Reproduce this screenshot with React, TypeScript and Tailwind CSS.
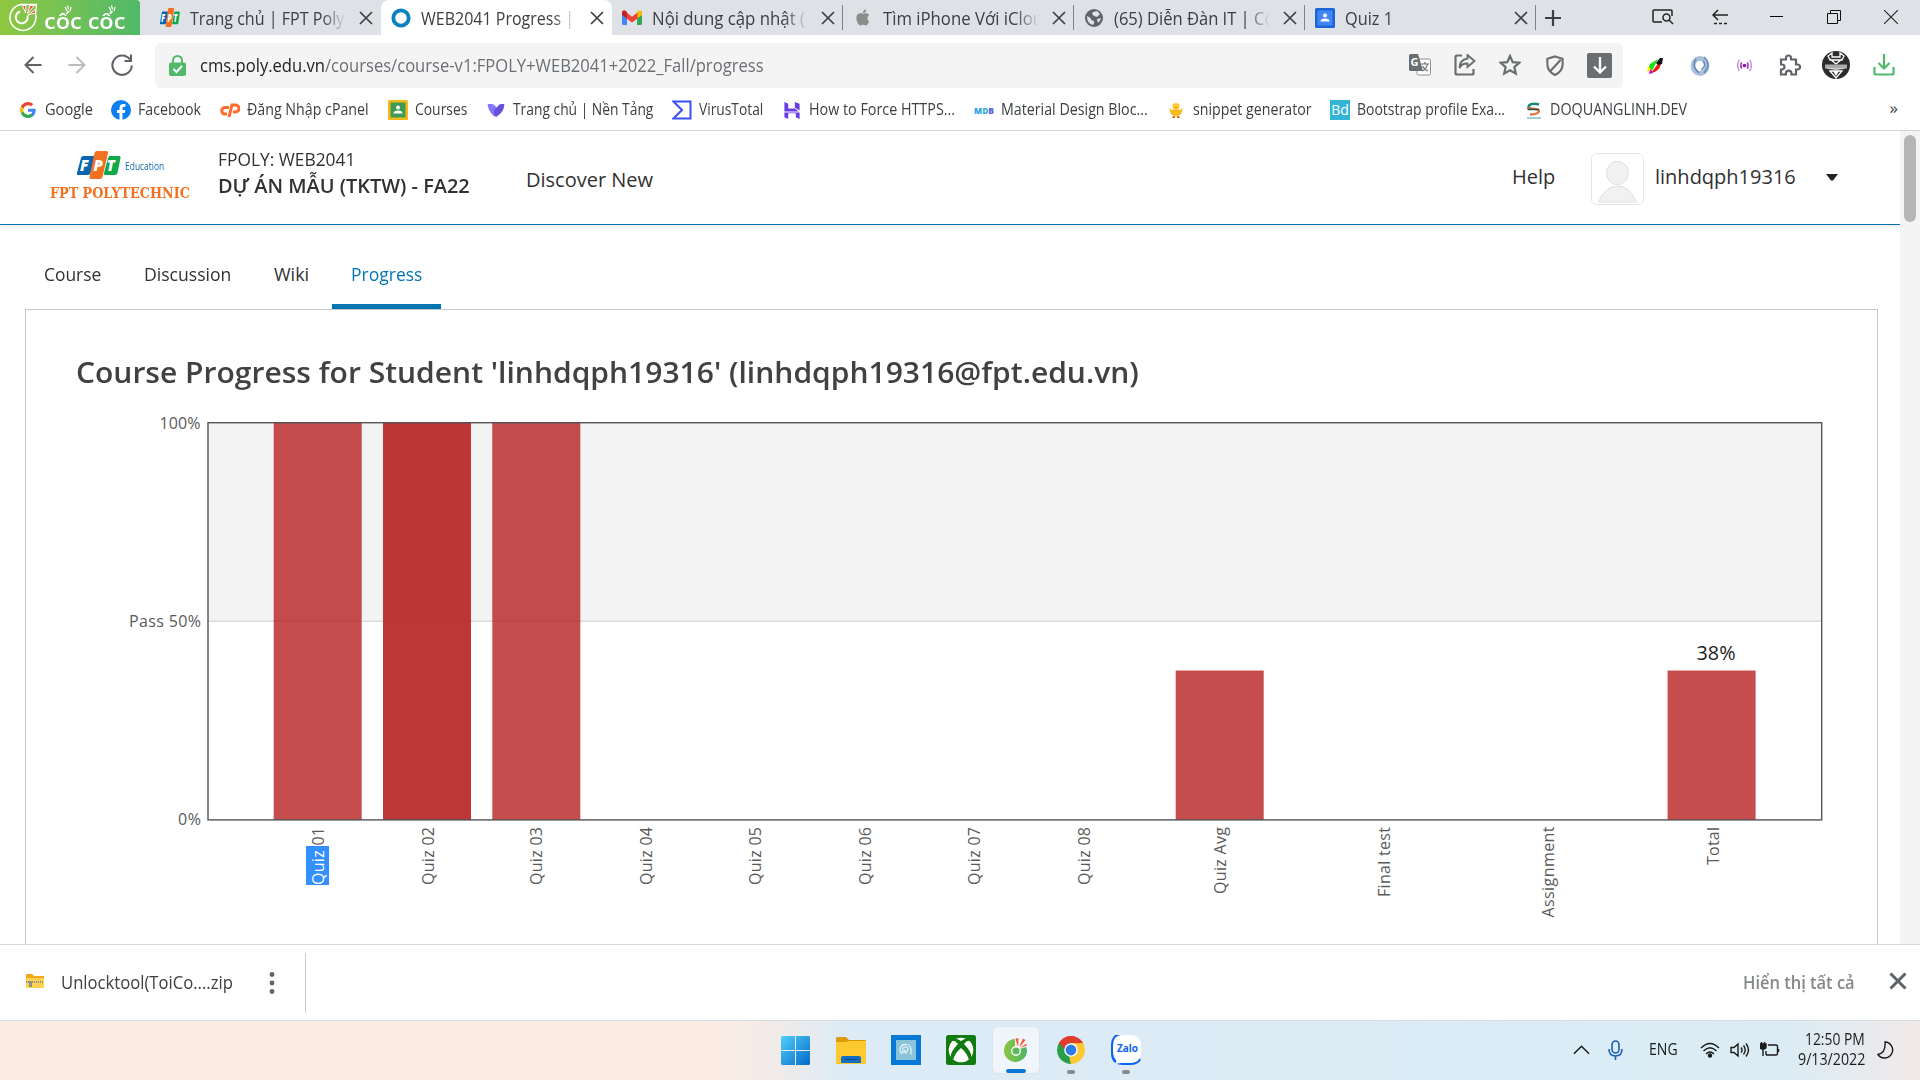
import React, { useLayoutEffect, useRef, useState } from "react";

/* A single line of text drawn at a fixed width. */
function Fit({ w, className = "", children }: { w: number; className?: string; children: React.ReactNode }) {
  const ref = useRef<HTMLSpanElement>(null);
  const [k, setK] = useState(1);
  useLayoutEffect(() => {
    if (ref.current) setK(w / ref.current.offsetWidth);
  }, [w]);
  return (
    <span className={`block shrink-0 whitespace-nowrap ${className}`} style={{ width: w }}>
      <span ref={ref} className="inline-block origin-left" style={{ transform: `scaleX(${k})` }}>
        {children}
      </span>
    </span>
  );
}

function FptLogo({ className }: { className: string }) {
  return (
    <svg viewBox="0 0 44 28" className={className} preserveAspectRatio="none">
      <path d="M6 5h10q2 0 1.500 2l-4 15q-.5 2-2.500 2H1q-1.500 0-1-2L4 7q.5-2 2-2z" fill="#0a64ae" />
      <path d="M33 5h9q2 0 1.500 2l-3 15q-.5 2-2.500 2H28q-1.500 0-1-2l4-15q.5-2 2-2z" fill="#0ea94b" />
      <path d="M20 0h9q2.500 0 2 2l-5.500 24q-.5 2-2.500 2h-9q-2 0-1.500-2l5-24q.5-2 2.500-2z" fill="#f37021" />
      <g fill="#fff" fontFamily="Open Sans" fontWeight="800" fontStyle="italic" fontSize="15">
        <text x="3" y="20">F</text>
        <text x="16.500" y="20">P</text>
        <text x="29.500" y="20">T</text>
      </g>
    </svg>
  );
}

function CocMark({ light = false }: { light?: boolean }) {
  return light ? (
    <svg viewBox="0 0 30 30" className="h-[30px] w-[30px]" fill="none">
      <path d="M12.500 1.500A13 13 0 1 0 26.500 11" stroke="#fff" strokeWidth="1.500" />
      <path d="M12.500 2V1.500H27.500L26.500 11" stroke="#fff" strokeWidth="1.300" />
      <path d="M11 8.500a6 6 0 1 0 7.500 4" stroke="#fff" strokeWidth="2" />
      <path d="M13.500 2.500l3.500 0-.5 7.500z M21 2.500l4.500 0-7 8z M26.500 6.500l0 3.500-7.500 2z" fill="#f0532d" stroke="#fff" strokeWidth="1" />
    </svg>
  ) : (
    <svg viewBox="0 0 24 26" className="h-[26px] w-6">
      <defs>
        <linearGradient id="cc" x1="0" x2="1">
          <stop offset="0" stopColor="#8bc53f" />
          <stop offset="1" stopColor="#4cb564" />
        </linearGradient>
      </defs>
      <path d="M11 2A11.500 11.500 0 1 0 23 14q0-2-1-4l-7 2-4-1z" fill="url(#cc)" />
      <circle cx="12" cy="14" r="5" fill="#fff" />
      <circle cx="12" cy="14" r="3.600" fill="#5cb85a" />
      <path d="M11 1h4l-.5 8h-1.500z M19 1l3 2-6 7-1-1z M23 6v3l-6 2-.5-1z" fill="#f05a3c" stroke="#fff" strokeWidth=".7" />
    </svg>
  );
}

const X = () => (
  <svg viewBox="0 0 14 14" className="h-[14px] w-[14px] shrink-0" stroke="#3c4043" strokeWidth="1.700">
    <path d="M1 1l12 12M13 1L1 13" />
  </svg>
);

const Ring = () => (
  <svg viewBox="0 0 20 20" className="h-5 w-5">
    <circle cx="10" cy="10" r="7.700" fill="none" stroke="#0b82c0" strokeWidth="3.800" />
  </svg>
);
const Gmail = () => (
  <svg viewBox="0 0 20 15" className="h-[15px] w-5">
    <path d="M0 2h5v13H1.500Q0 15 0 13.500z" fill="#4285f4" />
    <path d="M15 2h5v11.500q0 1.500-1.500 1.500H15z" fill="#34a853" />
    <path d="M15 2l2-1.500Q20-.5 20 3v2l-5 3.500z" fill="#fbbc04" />
    <path d="M4.500 2.500L10 6.700l5.500-4.200v6L10 12.500 4.500 8.500z" fill="#ea4335" />
    <path d="M5 2L3 .5Q0-.5 0 3v2l5 3.500z" fill="#c5221f" />
  </svg>
);
const Apple = () => (
  <svg viewBox="0 0 24 24" className="h-[19px] w-[19px]" fill="#8b8b8b">
    <path d="M17 12.500c0-2.500 2-3.700 2.200-3.800-1.200-1.700-3-2-3.700-2-1.600-.2-3 .9-3.900.9-.8 0-2-.9-3.300-.9C5 6.800 3 9 3 12.800 3 17 6 22 8.300 22c1.200 0 1.700-.8 3.200-.8s1.900.8 3.200.8c2 0 4-3.500 4.500-5.300-.2 0-2.200-1-2.200-4.200zM14.300 5.200C15 4.300 15.500 3 15.300 1.800c-1 0-2.300.7-3 1.600-.7.800-1.300 2-1.100 3.200 1.200.1 2.400-.6 3.100-1.400z" />
  </svg>
);
const Globe = () => (
  <svg viewBox="0 0 18 18" className="h-[18px] w-[18px]">
    <circle cx="9" cy="9" r="9" fill="#5f6368" />
    <path d="M2 7q3 1 4 3t3 2q1 2-1 4Q2 15 2 7zM8 3l4-1 3 3-3 3-3-1-2-2zM12 10l4-1q-1 4-3 5z" fill="#dee1e6" />
  </svg>
);
function Classroom({ frame, fill }: { frame: string; fill: string }) {
  return (
    <svg viewBox="0 0 20 20" className="h-5 w-5">
      <rect width="20" height="20" rx="1.500" fill={frame} />
      <rect x="2.500" y="2.500" width="15" height="15" fill={fill} />
      <circle cx="10" cy="7.500" r="2" fill="#fff" />
      <path d="M5.500 13.500q0-3 4.500-3t4.500 3z" fill="#fff" />
    </svg>
  );
}

function Tab({ icon, title, w, active = false, line = false }: { icon: React.ReactNode; title: string; w: number; active?: boolean; line?: boolean }) {
  return (
    <div className={`relative flex h-[35px] w-[231px] shrink-0 items-center pl-[9px] ${active ? "rounded-t-lg bg-white" : ""}`}>
      <div className="flex w-[22px] justify-center">{icon}</div>
      <div className="ml-[9px] w-[161px] overflow-hidden [mask-image:linear-gradient(to_right,black_82%,transparent_97%)]">
        <Fit w={w} className="text-[18px] leading-[28px] text-[#3c4043]">{title}</Fit>
      </div>
      <div className="ml-[8px]"><X /></div>
      {line && <div className="absolute right-0 top-[5px] h-[25px] w-px bg-[#808489]" />}
    </div>
  );
}

function Mark({ gap, icon, text, w }: { gap: number; icon: React.ReactNode; text: string; w: number }) {
  return (
    <div className="flex items-center" style={{ marginLeft: gap }}>
      <div className="flex w-5 justify-center">{icon}</div>
      <Fit w={w} className="-mt-0.5 ml-[7px] mr-px text-[15.5px] leading-6 text-[#3c4043]">{text}</Fit>
    </div>
  );
}

const Slot = ({ w, children }: { w: number; children?: React.ReactNode }) => (
  <div className="flex shrink-0 items-center justify-center" style={{ width: w }}>{children}</div>
);

const line = { fill: "none", stroke: "#6a6e70", strokeWidth: 2.2 } as const;

function Browser() {
  return (
    <>
      <div className="flex h-[35px] bg-[#dee1e6]">
        <div className="relative flex w-[140px] items-center rounded-tr-sm bg-linear-to-r from-[#8fc740] to-[#4fb968] pl-[9px]">
          <CocMark light />
          <Fit w={81} className="ml-[5px] mt-1 text-[22px] font-semibold leading-8 text-white">cốc cốc</Fit>
          <svg viewBox="0 0 60 10" className="absolute left-[63px] top-[4px] h-[10px] w-[60px]" stroke="#fff" strokeWidth="1.200">
            <path d="M2 3l2 4M4.500 1.500l1 4M8 3l-1 4M46 3l2 4M48.500 1.500l1 4M52 3l-1 4" />
          </svg>
        </div>
        <div className="ml-[10px] flex">
          <Tab icon={<FptLogo className="h-[19px] w-5" />} title="Trang chủ | FPT Polyt" w={160} />
          <Tab active icon={<Ring />} title="WEB2041 Progress | " w={153} />
          <Tab line icon={<Gmail />} title="Nội dung cập nhật (" w={153} />
          <Tab line icon={<Apple />} title="Tìm iPhone Với iClou" w={160} />
          <Tab line icon={<Globe />} title="(65) Diễn Đàn IT | Cộ" w={160} />
          <Tab line icon={<Classroom frame="#1a66d6" fill="#4285f4" />} title="Quiz 1" w={48} />
        </div>
        <Slot w={34}>
          <svg viewBox="0 0 16 16" className="h-4 w-4" stroke="#3c4043" strokeWidth="2.200"><path d="M8 0v16M0 8h16" /></svg>
        </Slot>
        <div className="ml-auto flex">
          <Slot w={57}>
            <svg viewBox="0 0 22 18" className="mb-0.5 h-[18px] w-[22px]" fill="none" stroke="#222" strokeWidth="1.500">
              <path d="M10 14H2q-1 0-1-1V3q0-1 1-1h17q1 0 1 1v5" /><circle cx="14.500" cy="9.500" r="3.500" /><path d="M17 12l4 4" />
            </svg>
          </Slot>
          <Slot w={57}>
            <svg viewBox="0 0 16 16" className="mb-0.5 h-4 w-4" fill="none" stroke="#222" strokeWidth="1.500">
              <path d="M16 6H1M6 1L1 6l5 5" /><path d="M2 14.500h13" strokeDasharray="3 2" />
            </svg>
          </Slot>
          <Slot w={57}><div className="mb-0.5 h-px w-[13px] bg-black" /></Slot>
          <Slot w={57}>
            <svg viewBox="0 0 14 14" className="mb-0.5 h-[14px] w-[14px]" fill="none" stroke="#111"><path d="M.5 3.500h10v10H.5zM3.500 3V.5h10v10H11" /></svg>
          </Slot>
          <Slot w={58}>
            <svg viewBox="0 0 14 14" className="mb-0.5 h-[14px] w-[14px]" stroke="#222" strokeWidth="1.100"><path d="M0 0l14 14M14 0L0 14" /></svg>
          </Slot>
        </div>
      </div>

      <div className="flex h-[61px] items-center bg-white">
        <div className="flex w-[155px] pl-[11px]">
          <Slot w={44}>
            <svg viewBox="0 0 18 18" className="mb-0.5 h-[18px] w-[18px]" fill="none" stroke="#5f6368" strokeWidth="2"><path d="M17.500 9H2M9.500 1L1.500 9l8 8" /></svg>
          </Slot>
          <Slot w={44}>
            <svg viewBox="0 0 18 18" className="mb-0.5 h-[18px] w-[18px]" fill="none" stroke="#babcbe" strokeWidth="2"><path d="M.5 9H16M8.500 1l8 8-8 8" /></svg>
          </Slot>
          <Slot w={46}>
            <svg viewBox="0 0 22 22" className="mb-0.5 h-[22px] w-[22px]" fill="none" stroke="#5f6368" strokeWidth="2.100"><path d="M19 5.500A9.700 9.700 0 1 0 20.800 11.500M20 .5V7h-6.500" /></svg>
          </Slot>
        </div>
        <div className="flex h-[45px] w-[1468px] items-center rounded-md bg-[#f4f4f4] pl-[14px]">
          <svg viewBox="0 0 17 21" className="h-[21px] w-[17px]">
            <path d="M4 9V5.500a4.500 4.500 0 0 1 9 0V9" fill="none" stroke="#50b96a" strokeWidth="2" />
            <rect y="7.500" width="17" height="13.500" rx="2" fill="#50b96a" />
            <path d="M4.500 14l3 3 5.500-6" fill="none" stroke="#fff" strokeWidth="2" />
          </svg>
          <Fit w={564} className="mb-px ml-[14px] text-[18px] leading-7 text-[#6b6f73]">
            <span className="text-[#222]">cms.poly.edu.vn</span>/courses/course-v1:FPOLY+WEB2041+2022_Fall/progress
          </Fit>
          <div className="mb-px ml-auto mr-px flex">
            <Slot w={45}>
              <svg viewBox="0 0 22 22" className="h-[22px] w-[22px]">
                <rect x="8" y="5" width="13.500" height="16" rx="1.500" fill="#fff" stroke="#8d9192" />
                <path d="M1.500 0H9l5 17H1.500Q0 17 0 15.500v-14Q0 0 1.500 0z" fill="#6a6e70" />
                <text x="1.500" y="12" fontSize="11" fontWeight="700" fill="#fff" fontFamily="Open Sans">G</text>
                <path d="M12 10h8M16 8v2M18.500 10q-1 5-5 7M13.500 12q2 4 5.500 5" fill="none" stroke="#6a6e70" strokeWidth="1.200" />
              </svg>
            </Slot>
            <Slot w={45}>
              <svg viewBox="0 0 22 22" className="h-[22px] w-[22px]" {...line}>
                <path d="M8 1.500H3q-1.500 0-1.500 1.500v16q0 1.500 1.500 1.500h15q1.500 0 1.500-1.500v-4" /><path d="M13.500 1l7 6-7 6V9.500Q8 9 5.500 14q0-8 8-9.500z" strokeWidth="1.900" />
              </svg>
            </Slot>
            <Slot w={45}>
              <svg viewBox="0 0 22 22" className="h-[22px] w-[22px]" {...line}>
                <path d="M11 2l2.700 6.100 6.600.6-5 4.400 1.500 6.500L11 16.200l-5.800 3.400 1.500-6.500-5-4.400 6.600-.6z" />
              </svg>
            </Slot>
            <Slot w={45}>
              <svg viewBox="0 0 18 22" className="h-[21px] w-[18px]" {...line}>
                <path d="M9 1.500l8 2.500v6q0 7-8 11Q1 17 1 10V4zM15 5L4 17" />
              </svg>
            </Slot>
            <Slot w={45}>
              <div className="flex h-[25px] w-[25px] items-center justify-center rounded-xs bg-[#6a6e70]">
                <svg viewBox="0 0 14 17" className="h-[17px] w-[14px]" fill="none" stroke="#fff" strokeWidth="2.300"><path d="M7 0v15M1 9.500l6 6 6-6" /></svg>
              </div>
            </Slot>
          </div>
        </div>
        <div className="flex pl-[9px]">
          <Slot w={45}>
            <svg viewBox="0 0 16 18" className="h-[18px] w-4">
              <path d="M11 2L3 7 1 14l4 0z" fill="#13e313" /><path d="M1 9L0 15l5-2z" fill="#fff200" /><path d="M13 4L4 16q8-1 10-9z" fill="#f01818" />
              <path d="M2 17q0-3 2-5l2 4z" fill="#c010e0" /><path d="M9 6l4-5 3 0-1 6-4 1z" fill="#111" />
            </svg>
          </Slot>
          <Slot w={45}>
            <svg viewBox="0 0 20 20" className="h-5 w-5" fill="none">
              <ellipse cx="10" cy="10" rx="7" ry="7.500" stroke="#a9c0da" strokeWidth="4.800" />
              <path d="M14 1q8 7 0 16M6 3q-5 7 3 14M13 5q4 5-2 9" stroke="#6089b6" strokeWidth="1.500" />
            </svg>
          </Slot>
          <Slot w={45}>
            <svg viewBox="0 0 18 14" className="h-[13px] w-[17px]" fill="none" stroke="#c48ade" strokeWidth="1.500">
              <path d="M3.500 1q-4 6 0 12M14.500 1q4 6 0 12" /><path d="M6 3.500q-2 3.500 0 7M12 3.500q2 3.500 0 7" stroke="#a02fc4" /><circle cx="9" cy="7" r="2" fill="#8e17b8" stroke="none" />
            </svg>
          </Slot>
          <Slot w={45}>
            <svg viewBox="0 0 22 22" className="mb-px h-[22px] w-[22px]" {...line} stroke="#5f6368">
              <path d="M2 5.500h5V4a2.500 2.500 0 0 1 5 0v1.500h5v5h1.500a2.500 2.500 0 0 1 0 5H17v5h-4.500v-1a2.800 2.800 0 0 0-5.600 0v1H2v-5h1a2.500 2.500 0 0 0 0-5H2z" />
            </svg>
          </Slot>
          <Slot w={47}>
            <svg viewBox="0 0 28 28" className="mb-px h-7 w-7">
              <circle cx="14" cy="14" r="14" fill="#2c2c2c" />
              <path d="M6 5l4-3v4h8V2l4 3-2 4H8zM8 8l6 5 6-5M3 15h22M5 17l9 1 9-1M8 20l6 7 6-7z" fill="none" stroke="#fff" strokeWidth="1.300" />
              <path d="M11 20h6l-3 5z" fill="#fff" /><rect x="3" y="13.500" width="22" height="4" fill="#aaa" />
            </svg>
          </Slot>
          <Slot w={50}>
            <svg viewBox="0 0 22 22" className="mb-px h-[22px] w-[22px]" fill="none" stroke="#50b96a" strokeWidth="2.200"><path d="M11 0v14M5.500 9l5.500 5.500L16.500 9M1.500 13v6q0 1.500 1.500 1.500h16q1.500 0 1.500-1.500v-6" /></svg>
          </Slot>
        </div>
      </div>

      <div className="relative flex h-[34px] shrink-0 items-start bg-white pl-[18px] pt-[3px]">
        <Mark gap={0} w={48} text="Google" icon={
          <svg viewBox="0 0 18 18" className="h-4 w-4">
            <path d="M17.600 9.200c0-.6 0-1.200-.2-1.700H9v3.400h4.800a4 4 0 0 1-1.800 2.700v2.200h3c1.700-1.600 2.600-3.900 2.600-6.600z" fill="#4285f4" />
            <path d="M9 18c2.400 0 4.500-.8 6-2.200l-3-2.200c-2.600 1.700-6.800.8-8-2.900H1v2.300A9 9 0 0 0 9 18z" fill="#34a853" />
            <path d="M4 10.700a5.400 5.400 0 0 1 0-3.400V5H1a9 9 0 0 0 0 8z" fill="#fbbc05" />
            <path d="M9 3.600c1.300 0 2.500.5 3.400 1.300L15 2.300A9 9 0 0 0 1 5l3 2.300c.7-2.100 2.700-3.700 5-3.700z" fill="#ea4335" />
          </svg>} />
        <Mark gap={17} w={63} text="Facebook" icon={
          <svg viewBox="0 0 20 20" className="h-5 w-5"><circle cx="10" cy="10" r="10" fill="#0c7ff2" /><path d="M8.500 20v-7H6v-3h2.500V8q0-4 4-4l2 .2v2.500H13q-1.500 0-1.500 1.600V10h2.800l-.5 3h-2.300v7z" fill="#fff" /></svg>} />
        <Mark gap={18} w={122} text="Đăng Nhập cPanel" icon={
          <svg viewBox="0 0 20 14" className="h-[14px] w-5" fill="none" stroke="#ff6c2c" strokeWidth="3"><path d="M9 4.500H5a3.300 3.300 0 0 0 0 6.600h2M9 14l3-12h3.500a3 3 0 0 1 0 7H13" /></svg>} />
        <Mark gap={18} w={52} text="Courses" icon={<Classroom frame="#f5ba15" fill="#3f9a58" />} />
        <Mark gap={18} w={140} text="Trang chủ | Nền Tảng" icon={
          <svg viewBox="0 0 20 14" className="h-[13px] w-5"><path d="M1 0h4q2 0 3 1l3 3-1 9-2 .5Q1 7 1 0z" fill="#8577fa" /><path d="M19 0h-3q-2 0-3 1L8 7q-1 4 2 7 9-5 9-14z" fill="#6452dd" /></svg>} />
        <Mark gap={18} w={64} text="VirusTotal" icon={
          <svg viewBox="0 0 20 20" className="h-5 w-5" fill="none" stroke="#3b4ff5" strokeWidth="2"><path d="M1.500 1.500H18.500v17H1.500L10 10z" /></svg>} />
        <Mark gap={18} w={146} text="How to Force HTTPS..." icon={
          <svg viewBox="0 0 18 20" className="h-[19px] w-[18px]" fill="#673de6"><path d="M1 1l4 2v5h7l4 3H1zM12 1l5 2v7l-5-3zM1 12l4 0h12v7l-4-2v-4H5v6l-4-2z" /></svg>} />
        <Mark gap={18} w={147} text="Material Design Bloc..." icon={
          <svg viewBox="0 0 20 10" className="h-[10px] w-5"><text x="0" y="8.500" fontSize="9" fontWeight="800" textLength="20" lengthAdjust="spacingAndGlyphs" fontFamily="Open Sans"><tspan fill="#2aa6ea">M</tspan><tspan fill="#39b5cf">D</tspan><tspan fill="#5b61e0">B</tspan></text></svg>} />
        <Mark gap={17} w={119} text="snippet generator" icon={
          <svg viewBox="0 0 16 16" className="h-4 w-4"><circle cx="8" cy="4.500" r="3.500" fill="#ffc928" /><path d="M1 6l3 2h8l3-2-2 6q-5 4-10 0z" fill="#fbb917" /><path d="M7 5h2l-1 1.500zM5 14h2v2H4zM9 14h2l1 2H9z" fill="#ef6c00" /></svg>} />
        <Mark gap={17} w={148} text="Bootstrap profile Exa..." icon={
          <div className="flex h-5 w-5 items-center justify-center bg-[#33b5d8] text-[14px] leading-5 text-white">Bd</div>} />
        <Mark gap={17} w={137} text="DOQUANGLINH.DEV" icon={
          <svg viewBox="0 0 17 17" className="h-[17px] w-[17px]" fill="none"><path d="M14 2.500Q7 .5 4 3.500q-1.500 3 3 3.500" stroke="#138b78" strokeWidth="2.600" /><path d="M2 6.500q12 0 12 2.500-1 3.500-9 3.500" stroke="#e2703a" strokeWidth="2.400" /><path d="M3 7.500h11" stroke="#24454a" strokeWidth="1.400" /><path d="M2 16h14" stroke="#5fb3a6" strokeWidth="1.200" /></svg>} />
        <span className="absolute right-[22px] top-0 text-[17px] leading-6 text-[#3c4043]">»</span>
      </div>
      <div className="h-px bg-[#d3d3d3]" />
    </>
  );
}

const bars = [
  { x: 273.7, top: 422.5, fill: "#b72121", o: 0.8 },
  { x: 383, top: 422.5, fill: "#b72121", o: 0.9 },
  { x: 492.3, top: 422.5, fill: "#b72121", o: 0.8 },
  { x: 1175.7, top: 670.5, fill: "#b72121", o: 0.8 },
  { x: 1667.6, top: 670.5, fill: "#b72121", o: 0.8 },
];
const ticks = [
  { t: "Quiz 02", x: 434, y: 885, l: 58 },
  { t: "Quiz 03", x: 542, y: 885, l: 58 },
  { t: "Quiz 04", x: 652, y: 885, l: 58 },
  { t: "Quiz 05", x: 761, y: 885, l: 58 },
  { t: "Quiz 06", x: 871, y: 885, l: 58 },
  { t: "Quiz 07", x: 980, y: 885, l: 58 },
  { t: "Quiz 08", x: 1089.5, y: 885, l: 58 },
  { t: "Quiz Avg", x: 1226, y: 894, l: 67 },
  { t: "Final test", x: 1390, y: 897, l: 70 },
  { t: "Assignment", x: 1554, y: 917.5, l: 91 },
  { t: "Total", x: 1718.5, y: 865, l: 38 },
];

/* Grade chart; the view box keeps page coordinates. */
function Chart() {
  return (
    <svg viewBox="100 410 1760 520" className="ml-[74px] h-[520px] w-[1760px]" fontFamily="'Open Sans', sans-serif" fontSize="16" fill="#5a5a5a">
      <rect x="208" y="423" width="1613" height="198" fill="#f3f3f3" />
      <rect x="208" y="620.500" width="1613" height="1.500" fill="#dcdcdc" />
      {bars.map((b) => (
        <rect key={b.x} x={b.x} y={b.top} width="88" height={820 - b.top} fill={b.fill} fillOpacity={b.o} />
      ))}
      <rect x="208" y="422.700" width="1613.700" height="397.200" fill="none" stroke="#545454" strokeWidth="1.400" />
      <text x="159.500" y="429" textLength="41">100%</text>
      <text x="129" y="627" textLength="72">Pass 50%</text>
      <text x="178" y="825" textLength="23">0%</text>
      <text x="1696.500" y="660" fontSize="19.500" fill="#222" textLength="39" lengthAdjust="spacingAndGlyphs">38%</text>
      <rect x="306" y="846" width="23" height="39" fill="#3390ff" />
      <text transform="translate(324 885) rotate(-90)" textLength="58">
        <tspan fill="#fff">Quiz</tspan> 01
      </text>
      {ticks.map((k) => (
        <text key={k.t} transform={`translate(${k.x} ${k.y}) rotate(-90)`} textLength={k.l}>{k.t}</text>
      ))}
    </svg>
  );
}

function Page() {
  return (
    <div className="flex h-[813px] overflow-hidden bg-white font-['Open_Sans',sans-serif] text-[#313131]">
      <div className="w-[1900px]">
        <header className="flex h-[94px] items-start border-b border-[#0075b4] shadow-[0_2px_4px_rgba(0,0,0,0.08)]">
          <div className="ml-[50px] w-[140px] pt-[20px]">
            <div className="ml-[27px] flex">
              <FptLogo className="h-7 w-[44px]" />
              <Fit w={39} className="ml-[4px] mt-[5px] text-[11.5px] leading-[20px] text-[#1268ad]">Education</Fit>
            </div>
            <Fit w={140} className="mt-[5px] font-['DejaVu_Serif',serif] text-[14.5px] font-bold leading-[18px] text-[#f37021]">FPT POLYTECHNIC</Fit>
          </div>
          <div className="ml-[28px] pt-[15px]">
            <Fit w={137} className="text-[18px] leading-[26px]">FPOLY: WEB2041</Fit>
            <Fit w={252} className="text-[20px] font-semibold leading-[27px]">DỰ ÁN MẪU (TKTW) - FA22</Fit>
          </div>
          <Fit w={127} className="ml-[56px] mt-[34px] text-[20px] leading-[30px]">Discover New</Fit>
          <div className="ml-auto flex items-start">
            <Fit w={43} className="mt-[31px] text-[20px] leading-[30px]">Help</Fit>
            <svg viewBox="0 0 53 52" className="ml-[36px] mt-[22px] h-[52px] w-[53px]">
              <rect x=".5" y=".5" width="52" height="51" rx="5" fill="#fff" stroke="#e7e7e7" />
              <g fill="#f1f1f1" stroke="#e0e0e0"><ellipse cx="26.500" cy="20" rx="11" ry="11.700" /><path d="M7.500 49Q14 33 26.500 33T45.500 49z" /></g>
            </svg>
            <Fit w={141} className="ml-[11px] mr-px mt-[31px] text-[20px] leading-[30px]">linhdqph19316</Fit>
            <svg viewBox="0 0 12 7" className="ml-[29px] mr-[62px] mt-[43px] h-[7px] w-3" fill="#222"><path d="M0 0h12L7 6.500H5z" /></svg>
          </div>
        </header>
        <nav className="ml-[25px] flex h-[84px] items-end text-[18px] leading-[30px]">
          <Fit w={57} className="mb-[20px] ml-[19px]">Course</Fit>
          <Fit w={87} className="mb-[20px] ml-[43px]">Discussion</Fit>
          <Fit w={35} className="mb-[20px] ml-[43px]">Wiki</Fit>
          <div className="ml-[23px] w-[109px] border-b-[5px] border-[#0075b4] pb-[15px] pl-[19px] text-[#0075b4]">
            <Fit w={71}>Progress</Fit>
          </div>
        </nav>
        <main className="ml-[25px] h-[700px] w-[1853px] border border-[#c8c8c8]">
          <Fit w={1063} className="ml-[50px] mt-[42px] text-[29px] font-semibold leading-[40px] text-[#414141]">
            Course Progress for Student 'linhdqph19316' (linhdqph19316@fpt.edu.vn)
          </Fit>
          <div className="mt-[18px]"><Chart /></div>
        </main>
      </div>
      <div className="w-5 bg-[#f4f4f4] pl-1 pt-1">
        <div className="h-[87px] w-3 rounded-full bg-[#b5b5b5]" />
      </div>
    </div>
  );
}

function Downloads() {
  return (
    <div className="flex h-[76px] items-center border-t border-[#d9d9d9] bg-white">
      <svg viewBox="0 0 18 14" className="mb-1 ml-[26px] h-[14px] w-[18px]">
        <path d="M0 0h6l2 2h10v3H0z" fill="#f2a81d" /><rect y="4" width="18" height="10" fill="#ffd24f" />
        <path d="M0 8h18" stroke="#8d8d8d" strokeWidth="2" strokeDasharray="1 1" /><rect x="3" y="7" width="3" height="6" fill="#909090" />
      </svg>
      <Fit w={172} className="mb-0.5 ml-[17px] text-[18px] leading-7 text-[#3c4043]">Unlocktool(ToiCo....zip</Fit>
      <svg viewBox="0 0 6 22" className="ml-[36px] h-[22px] w-[6px]" fill="#5f6368"><circle cx="3" cy="2.500" r="2.400" /><circle cx="3" cy="11" r="2.400" /><circle cx="3" cy="19.500" r="2.400" /></svg>
      <div className="ml-[30px] h-[60px] w-px bg-[#cbcbcb]" />
      <Fit w={112} className="mb-0.5 ml-auto text-[17.5px] font-semibold leading-7 text-[#85888b]">Hiển thị tất cả</Fit>
      <svg viewBox="0 0 18 18" className="mb-[3px] ml-[34px] mr-[13px] h-[18px] w-[18px]" stroke="#5f6368" strokeWidth="3"><path d="M1.500 1.500l15 15M16.500 1.500l-15 15" /></svg>
    </div>
  );
}

function Dock({ children, dot = false, active = false }: { children: React.ReactNode; dot?: boolean; active?: boolean }) {
  return (
    <div className={`relative mr-[7px] flex h-12 w-12 items-center justify-center rounded-md ${active ? "border border-[#dce4ea] bg-[#eff5fa]" : ""}`}>
      {children}
      {active && <div className="absolute bottom-0 h-1 w-5 rounded-full bg-[#0a78d4]" />}
      {dot && <div className="absolute bottom-0 h-1 w-2 rounded-full bg-[#858b90]" />}
    </div>
  );
}

const tray = { fill: "none", stroke: "#1b1b1b", strokeWidth: 1.4 } as const;

function Taskbar() {
  return (
    <div className="relative flex h-[60px] items-center border-t border-[#d9e0e4] bg-[linear-gradient(90deg,#fbece3_0%,#fbece3_37%,#f3ebe8_40%,#ddebf6_44%,#dcebf5_60%,#daedf6_80%,#dcecf5_93%,#e7eaee_97%,#f1eae8_100%)] pb-px">
      <div className="ml-[772px] flex">
        <Dock>
          <svg viewBox="0 0 29 29" className="mr-px h-[29px] w-[29px]">
            <defs><linearGradient id="win" x1="0" y1="0" x2="1" y2="1"><stop offset="0" stopColor="#4fd0fb" /><stop offset="1" stopColor="#0669c9" /></linearGradient></defs>
            <path d="M1 0h13v14H0V1zM15 0h13l1 1v13H15zM0 15h14v14H1l-1-1zM15 15h14v13l-1 1H15z" fill="url(#win)" />
          </svg>
        </Dock>
        <Dock>
          <svg viewBox="0 0 30 27" className="h-[27px] w-[30px]">
            <path d="M1 0h9l3 3h16q1 0 1 1v4H0V1z" fill="#dc9a08" /><path d="M0 5h10l3-1h17v22q0 1-1 1H1q-1 0-1-1z" fill="#fdc931" />
            <path d="M5 26v-5q0-2 2-2h16q2 0 2 2v5z" fill="#0f6fc2" /><path d="M9 22.500h13" stroke="#0a4c8b" strokeWidth="1.200" />
          </svg>
        </Dock>
        <Dock>
          <svg viewBox="0 0 30 30" className="h-[30px] w-[30px]">
            <rect width="30" height="30" fill="#0878d6" /><rect x="5" y="5" width="20" height="20" fill="#8ac4d8" />
            <path d="M11 19q-3-3-1.500-6.500T15 9.500q5 0 5 6v4M12.500 18q-2-5 1-6 3.500-1 3.500 2.500l-2 3.500q-2 0-1-3.500" fill="none" stroke="#e7f6fb" strokeWidth="1.200" />
          </svg>
        </Dock>
        <Dock>
          <svg viewBox="0 0 30 30" className="h-[30px] w-[30px]">
            <rect width="30" height="30" rx="2.500" fill="#107c10" /><circle cx="15" cy="15" r="12.300" fill="#fff" />
            <path d="M8 3.500Q11 3 15 6q4-3 7-2.500L24 6q-3-1-6 3 7 7 7.500 13L23 25q-2-7-8-12-6 5-8 12l-2.500-3Q5 16 12 9 9 5 6 6z" fill="#107c10" />
          </svg>
        </Dock>
        <Dock active><CocMark /></Dock>
        <Dock dot>
          <svg viewBox="0 0 28 28" className="h-7 w-7">
            <path d="M14 14L1.900 7A14 14 0 0 1 26.100 7z" fill="#e33b2e" /><path d="M14 14l12.100-7A14 14 0 0 1 14 28z" fill="#fcc934" />
            <path d="M14 14v14A14 14 0 0 1 1.900 7z" fill="#2a9d4a" /><path d="M14 7h12.100L20 17l-6 11q-3-8 0-12z" fill="#fcc934" /><path d="M1.900 7L8 17.500l6-3.500V7z" fill="#2a9d4a" /><path d="M1.900 7A14 14 0 0 1 26.100 7H14q-5 0-6.500 6z" fill="#e33b2e" />
            <circle cx="14" cy="14" r="6.800" fill="#fff" /><circle cx="14" cy="14" r="5.400" fill="#2f7bea" />
          </svg>
        </Dock>
        <Dock dot>
          <svg viewBox="0 0 30 30" className="h-[30px] w-[30px]">
            <path d="M9 0H4Q0 4 0 10v8Q0 30 12 30h7q8 0 11-5z" fill="#0a63f3" />
            <path d="M11 0h8q11 0 11 11v6q0 11-11 11h-9l-6 1q2-2 1-4-3-3-3-9v-5Q2 0 11 0z" fill="#fff" />
            <text x="6" y="17" fontFamily="Open Sans" fontWeight="700" fontSize="10" textLength="21" fill="#0a63f3">Zalo</text>
          </svg>
        </Dock>
      </div>
      <div className="ml-auto flex items-center">
        <svg viewBox="0 0 18 10" className="h-[10px] w-[17px]" {...tray} strokeWidth={1.6}><path d="M1 9l8-8 8 8" /></svg>
        <svg viewBox="0 0 15 20" className="ml-[18px] h-5 w-[15px]" fill="none" stroke="#1d5cb8" strokeWidth="1.600"><rect x="4" y="1" width="7" height="12" rx="3.500" /><path d="M1 9q0 7 6.500 7T14 9M7.500 16v4" /></svg>
        <Fit w={29} className="mb-0.5 ml-[26px] text-[15.5px] leading-5 text-[#1b1b1b]">ENG</Fit>
        <svg viewBox="0 0 20 16" className="ml-[22px] h-4 w-5" {...tray}><path d="M1 6q9-9 18 0M3.500 9q6.500-6.500 13 0M6 12q4-4 8 0" /><circle cx="10" cy="13.500" r="1.500" fill="#1b1b1b" /></svg>
        <svg viewBox="0 0 20 16" className="ml-[10px] h-4 w-5" {...tray}><path d="M1 5.500h3L8 2v12l-4-3.500H1zM11 5.500q2 2.500 0 5M13.500 3.500q3.500 4.500 0 9M16 1.500q5 6.500 0 13" /></svg>
        <svg viewBox="0 0 20 16" className="ml-[10px] h-4 w-5" {...tray}><path d="M8 3h8q1.500 0 1.500 1.500v7q0 1.500-1.500 1.500H6M18.500 7v3M3 6v8M6 9v4" /><path d="M0 2h6v3q0 2-3 2T0 5zM1.500 0v2M4.500 0v2" fill="#1b1b1b" /></svg>
        <div className="mb-[3px] ml-[18px] flex flex-col items-end text-[15.5px] leading-5 text-[#1b1b1b]">
          <Fit w={60}>12:50 PM</Fit>
          <Fit w={67}>9/13/2022</Fit>
        </div>
        <svg viewBox="0 0 17 18" className="ml-[12px] mr-[26px] h-[18px] w-[17px]" {...tray}><path d="M8 1a8 8 0 1 1-7 12.500Q9 12 8 1z" /></svg>
      </div>
    </div>
  );
}

export default function App() {
  return (
    <div className="flex h-[1080px] w-[1920px] flex-col overflow-hidden bg-white font-['Open_Sans','Noto_Sans',sans-serif]">
      <Browser />
      <Page />
      <Downloads />
      <Taskbar />
    </div>
  );
}
